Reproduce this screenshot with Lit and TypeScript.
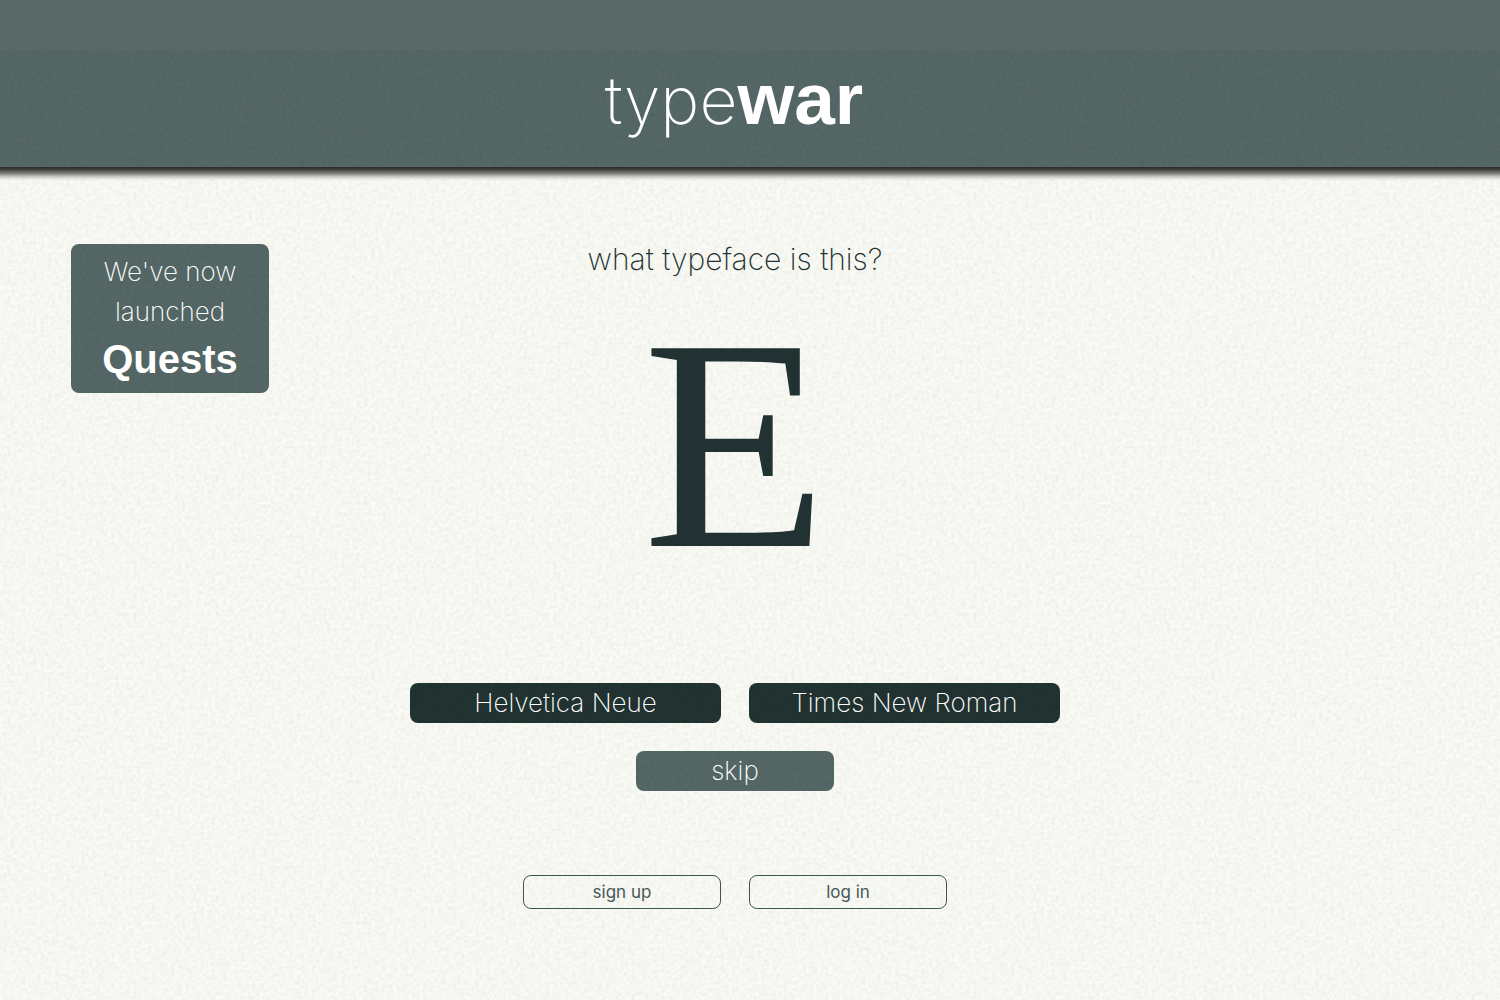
import { LitElement, html, css, unsafeCSS } from "lit";
import { customElement, property } from "lit/decorators.js";

// Fine paper grain, tiled over flat colours.
const grain = (r: number, g: number, b: number, alpha: number, seed: number) =>
  unsafeCSS(
    `url("data:image/svg+xml,${encodeURIComponent(
      `<svg xmlns="http://www.w3.org/2000/svg" width="420" height="420"><filter id="n" x="0" y="0" width="100%" height="100%" color-interpolation-filters="sRGB"><feTurbulence type="fractalNoise" baseFrequency="0.27" numOctaves="3" seed="${seed}" stitchTiles="stitch"/><feColorMatrix values="0 0 0 0 ${r} 0 0 0 0 ${g} 0 0 0 0 ${b} ${alpha} 0 0 0 ${-alpha * 0.3}"/></filter><rect width="420" height="420" filter="url(#n)"/></svg>`
    )}")`
  );

const paperGrain = grain(0.86, 0.86, 0.84, 0.7, 4);
const slateGrain = grain(0.4, 0.46, 0.44, 0.5, 9);

@customElement("site-header")
export class SiteHeader extends LitElement {
  static styles = css`
    :host {
      display: block;
    }
    .strip {
      height: 50px;
      background: #5a6866;
    }
    .bar {
      display: flex;
      justify-content: center;
      box-sizing: border-box;
      padding: 5px 32px 23px 0;
      background: ${slateGrain} #516463;
    }
    .title {
      margin: 0;
      font: 200 66px/88px Inter, "Liberation Sans", sans-serif;
      color: #fff;
    }
    .home {
      color: inherit;
      text-decoration: none;
    }
    .strong {
      font-family: "Liberation Sans", Arial, sans-serif;
      font-size: 73px;
      font-weight: 700;
    }
    .shade {
      height: 14px;
      background: linear-gradient(
        #2a2a2a 0,
        #3a3939 2px,
        #5c5a58 4px,
        #8b8986 7px,
        #bdbbb7 9px,
        rgba(230, 230, 225, 0.8) 12px,
        rgba(248, 249, 243, 0) 14px
      );
    }
  `;
  render() {
    return html`
      <header>
        <div class="strip"></div>
        <div class="bar">
          <h1 class="title"><a class="home" href="#">type<span class="strong">war</span></a></h1>
        </div>
        <div class="shade"></div>
      </header>
    `;
  }
}

@customElement("game-board")
export class GameBoard extends LitElement {
  @property() glyph = "E";
  @property({ attribute: false }) choices = ["Helvetica Neue", "Times New Roman"];

  static styles = css`
    :host {
      display: block;
    }
    .grid {
      display: grid;
      grid-template-columns: repeat(12, minmax(0, 1fr));
      column-gap: 28px;
      padding: 63px 101px 91px 71px;
      font-family: Inter, "Liberation Sans", sans-serif;
      font-weight: 200;
    }
    .news {
      grid-column: 1 / span 2;
      grid-row: 1 / span 2;
      align-self: start;
      display: flex;
      flex-direction: column;
      align-items: center;
      padding: 8px 0 7px;
      border-radius: 8px;
      background: ${slateGrain} #516463;
      color: #fff;
      font-size: 26px;
      line-height: 40px;
      text-align: center;
      text-decoration: none;
    }
    .quests {
      font: 700 40px/54px "Liberation Sans", Arial, sans-serif;
    }
    .question {
      grid-column: 4 / span 6;
      grid-row: 1;
      margin: 0;
      font-size: 30px;
      font-weight: 200;
      line-height: 30px;
      text-align: center;
      color: #223131;
    }
    .glyph {
      grid-column: 4 / span 6;
      grid-row: 2;
      margin-bottom: 69px;
      font: 302px/340px "Liberation Serif", "Times New Roman", serif;
      text-align: center;
      color: #223131;
    }
    .choices {
      grid-column: 4 / span 6;
      grid-row: 3;
      display: flex;
      gap: 28px;
    }
    .choice,
    .skip,
    .account {
      box-sizing: border-box;
      margin: 0;
      border: 0;
      border-radius: 8px;
      padding: 0;
      font: 200 26px/40px Inter, "Liberation Sans", sans-serif;
      text-align: center;
      text-decoration: none;
      color: #fff;
      cursor: pointer;
    }
    .choice {
      flex: 1;
      background: ${slateGrain} #213231;
      background-blend-mode: soft-light;
    }
    .skip {
      grid-column: 6 / span 2;
      grid-row: 4;
      margin-top: 28px;
      background: ${slateGrain} #516463;
    }
    .account {
      grid-row: 5;
      margin-top: 84px;
      border: 1px solid #3f5453;
      font-size: 17px;
      font-weight: 400;
      line-height: 32px;
      color: #465857;
    }
    .signup {
      grid-column: 5 / span 2;
    }
    .login {
      grid-column: 7 / span 2;
    }
  `;
  render() {
    return html`
      <main class="grid">
        <a class="news" href="#quests">
          <span>We've now</span>
          <span>launched</span>
          <span class="quests">Quests</span>
        </a>
        <h2 class="question">what typeface is this?</h2>
        <div class="glyph">${this.glyph}</div>
        <div class="choices">
          ${this.choices.map((name) => html`<button class="choice" type="button">${name}</button>`)}
        </div>
        <button class="skip" type="button">skip</button>
        <a class="account signup" href="#signup">sign up</a>
        <a class="account login" href="#login">log in</a>
      </main>
    `;
  }
}

@customElement("app-root")
export class AppRoot extends LitElement {
  static styles = css`
    :host {
      display: block;
      min-height: 100vh;
      background: ${paperGrain} #fafbf5;
    }
  `;
  render() {
    return html`<site-header></site-header><game-board></game-board>`;
  }
}
